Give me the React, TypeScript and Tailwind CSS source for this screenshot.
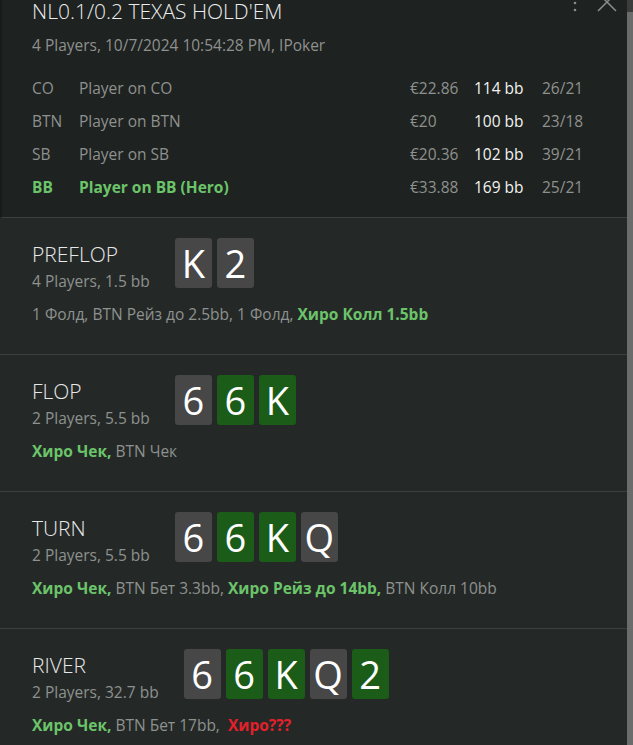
type Card = { rank: string; hit?: boolean };
type Action = { text: string; tone: 'hero' | 'villain' | 'alert' };

interface Street {
  name: string;
  info: string;
  cards: Card[];
  actions: Action[];
}

const players = [
  { pos: 'CO', name: 'Player on CO', stack: '€22.86', bb: '114 bb', stats: '26/21' },
  { pos: 'BTN', name: 'Player on BTN', stack: '€20', bb: '100 bb', stats: '23/18' },
  { pos: 'SB', name: 'Player on SB', stack: '€20.36', bb: '102 bb', stats: '39/21' },
  { pos: 'BB', name: 'Player on BB (Hero)', stack: '€33.88', bb: '169 bb', stats: '25/21', hero: true },
];

const streets: Street[] = [
  {
    name: 'PREFLOP',
    info: '4 Players, 1.5 bb',
    cards: [{ rank: 'K' }, { rank: '2' }],
    actions: [
      { text: '1 Фолд, BTN Рейз до 2.5bb, 1 Фолд, ', tone: 'villain' },
      { text: 'Хиро Колл 1.5bb', tone: 'hero' },
    ],
  },
  {
    name: 'FLOP',
    info: '2 Players, 5.5 bb',
    cards: [{ rank: '6' }, { rank: '6', hit: true }, { rank: 'K', hit: true }],
    actions: [
      { text: 'Хиро Чек, ', tone: 'hero' },
      { text: 'BTN Чек', tone: 'villain' },
    ],
  },
  {
    name: 'TURN',
    info: '2 Players, 5.5 bb',
    cards: [{ rank: '6' }, { rank: '6', hit: true }, { rank: 'K', hit: true }, { rank: 'Q' }],
    actions: [
      { text: 'Хиро Чек, ', tone: 'hero' },
      { text: 'BTN Бет 3.3bb, ', tone: 'villain' },
      { text: 'Хиро Рейз до 14bb, ', tone: 'hero' },
      { text: 'BTN Колл 10bb', tone: 'villain' },
    ],
  },
  {
    name: 'RIVER',
    info: '2 Players, 32.7 bb',
    cards: [
      { rank: '6' },
      { rank: '6', hit: true },
      { rank: 'K', hit: true },
      { rank: 'Q' },
      { rank: '2', hit: true },
    ],
    actions: [
      { text: 'Хиро Чек, ', tone: 'hero' },
      { text: 'BTN Бет 17bb, ', tone: 'villain' },
      { text: ' Хиро???', tone: 'alert' },
    ],
  },
];

const toneClass = {
  hero: 'font-bold text-[#6cc46a]',
  villain: 'text-[#8e918f]',
  alert: 'font-bold text-[#e5202a]',
};

const StreetBlock = ({ street }: { street: Street }) => (
  <div className="border-b border-[#3b403e] bg-[#242927] pl-[32px] pt-[20px] pb-[30px]">
    <div className="flex items-start gap-[25px]">
      <div className="pt-[3px]">
        <div className="text-[21px] font-light leading-[26px] text-[#e8e8e8]">{street.name}</div>
        <div className="mt-[4px] text-[15.5px] leading-[20px] text-[#8e918f]">{street.info}</div>
      </div>
      <div className="flex gap-[5px]">
        {street.cards.map((card, i) => (
          <div
            key={i}
            className={`flex h-[50px] w-[37px] items-center justify-center rounded-[3px] text-[38px] leading-none text-white ${
              card.hit ? 'bg-[#1a5c18]' : 'bg-[#474747]'
            }`}
          >
            {card.rank}
          </div>
        ))}
      </div>
    </div>
    <div className="mt-[13px] whitespace-pre text-[15.5px] leading-[20px]">
      {street.actions.map((a, i) => (
        <span key={i} className={toneClass[a.tone]}>
          {a.text}
        </span>
      ))}
    </div>
  </div>
);

export default function App() {
  return (
    <div className="flex h-[745px] w-[633px] overflow-hidden bg-[#242927] font-['Open_Sans','Noto_Sans',sans-serif]">
      <div className="min-w-0 flex-1">
        <div className="relative border-b border-[#3b403e] border-l-2 border-l-[#181b1a] bg-[#1e2220] pl-[30px] pr-[44px] pb-[13px]">
          {/* menu + close, half scrolled out of view */}
          <div className="absolute right-[10px] top-[-9px] flex items-center gap-[20px] text-[#8a8d8b]">
            <svg width="4" height="22" viewBox="0 0 4 22">
              <circle cx="2" cy="5" r="1.3" fill="currentColor" />
              <circle cx="2" cy="12" r="1.3" fill="currentColor" />
              <circle cx="2" cy="19" r="1.3" fill="currentColor" />
            </svg>
            <svg width="20" height="22" viewBox="0 0 20 22">
              <path d="M1 2 L19 20 M19 2 L1 20" stroke="currentColor" strokeWidth="1.5" />
            </svg>
          </div>
          <div className="text-[21px] font-light leading-[22px] text-[#ececec]">NL0.1/0.2 TEXAS HOLD'EM</div>
          <div className="mt-[12px] text-[15.5px] leading-[22px] text-[#8e918f]">
            4 Players, 10/7/2024 10:54:28 PM, IPoker
          </div>
          <div className="mt-[16px] grid grid-cols-[47px_1fr_64px_68px_41px] text-[15.5px]">
            {players.map((p) => (
              <div key={p.pos} className="contents">
                <div className={`leading-[33px] ${p.hero ? 'font-bold text-[#6cc46a]' : 'text-[#8e918f]'}`}>{p.pos}</div>
                <div className={`leading-[33px] ${p.hero ? 'font-bold text-[#6cc46a]' : 'text-[#8e918f]'}`}>{p.name}</div>
                <div className="leading-[33px] text-[#8e918f]">{p.stack}</div>
                <div className="leading-[33px] text-[#f2f2f2]">{p.bb}</div>
                <div className="whitespace-nowrap leading-[33px] text-[#8e918f]">{p.stats}</div>
              </div>
            ))}
          </div>
        </div>
        {streets.map((s) => (
          <StreetBlock key={s.name} street={s} />
        ))}
      </div>
      <div className="flex w-[6px] flex-col bg-[#3a3d3c]">
        <div className="mt-[12px] flex-1 bg-[#6b6b6b]" />
      </div>
    </div>
  );
}
